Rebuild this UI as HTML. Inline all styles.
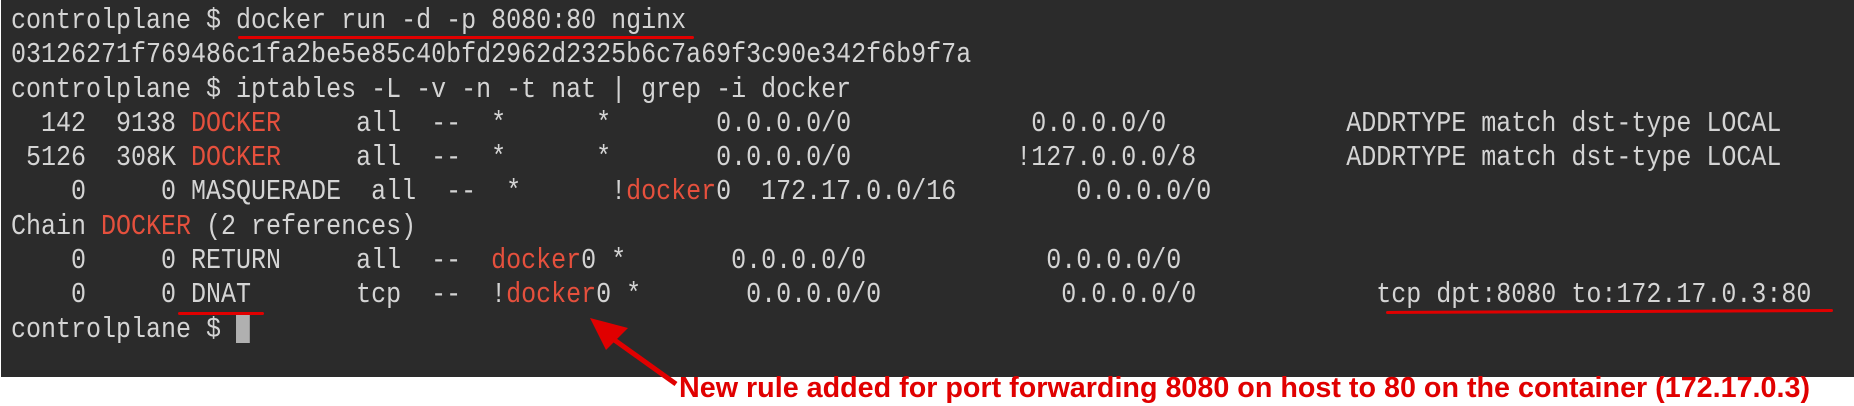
<!DOCTYPE html>
<html><head><meta charset="utf-8"><style>
html,body{margin:0;padding:0;background:#fff;width:1854px;height:406px;overflow:hidden;position:relative}
#term{position:absolute;left:1px;top:0;width:1853px;height:377px;background:#2b2b2b}
pre{position:absolute;left:11px;top:4px;margin:0;font-family:"Liberation Mono",monospace;font-size:29px;line-height:34.3px;color:#d4d4d4;white-space:pre;transform:scaleX(0.8621);transform-origin:0 0}
.r{color:#e5503d}
.cur{display:inline-block;width:16px;height:28px;background:#b0b0b0;vertical-align:-6px}
.ul{position:absolute;height:3px;background:#e00000;border-radius:2px}
svg{position:absolute;left:0;top:0}
</style></head><body>
<div id="term"></div>
<pre>controlplane $ docker run -d -p 8080:80 nginx
03126271f769486c1fa2be5e85c40bfd2962d2325b6c7a69f3c90e342f6b9f7a
controlplane $ iptables -L -v -n -t nat | grep -i docker
  142  9138 <span class="r">DOCKER</span>     all  --  *      *       0.0.0.0/0            0.0.0.0/0            ADDRTYPE match dst-type LOCAL
 5126  308K <span class="r">DOCKER</span>     all  --  *      *       0.0.0.0/0           !127.0.0.0/8          ADDRTYPE match dst-type LOCAL
    0     0 MASQUERADE  all  --  *      !<span class="r">docker</span>0  172.17.0.0/16        0.0.0.0/0
Chain <span class="r">DOCKER</span> (2 references)
    0     0 RETURN     all  --  <span class="r">docker</span>0 *       0.0.0.0/0            0.0.0.0/0
    0     0 DNAT       tcp  --  !<span class="r">docker</span>0 *       0.0.0.0/0            0.0.0.0/0            tcp dpt:8080 to:172.17.0.3:80
controlplane $ <span class="cur"></span></pre>
<div class="ul" style="left:238px;top:36px;width:456px"></div>
<div class="ul" style="left:178px;top:312px;width:86px"></div>
<div class="ul" style="left:1386px;top:310px;width:447px;transform:rotate(-0.25deg)"></div>
<svg width="1854" height="406">
<line x1="676" y1="384" x2="606" y2="334" stroke="#e00000" stroke-width="5"/>
<polygon points="590,318 628,328 606,350" fill="#e00000"/>
<text x="679" y="397" fill="#e00000" font-family="Liberation Sans Narrow, Liberation Sans, sans-serif" font-weight="bold" font-size="29" textLength="1131" lengthAdjust="spacingAndGlyphs">New rule added for port forwarding 8080 on host to 80 on the container (172.17.0.3)</text>
</svg>
</body></html>
